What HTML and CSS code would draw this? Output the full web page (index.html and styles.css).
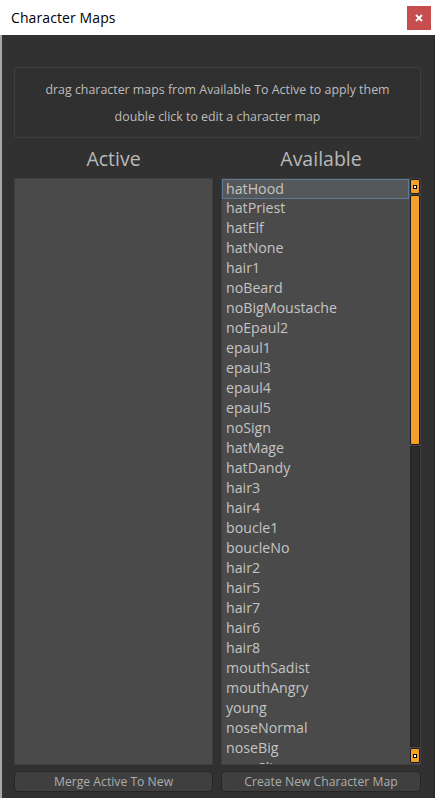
FILE: index.html
```html
<!DOCTYPE html>
<html>
<head>
<meta charset="utf-8">
<link rel="stylesheet" href="styles.css">
</head>
<body>
<div class="window">
  <div class="titlebar">
    <span class="title">Character Maps</span>
    <button class="close" aria-label="close">
      <svg width="10" height="10" viewBox="0 0 10 10"><path d="M2 2 L8 8 M8 2 L2 8" stroke="#fff" stroke-width="1.8"/></svg>
    </button>
  </div>
  <div class="main">
    <div class="info">
      <p>drag character maps from Available To Active to apply them</p>
      <p>double click to edit a character map</p>
    </div>
    <div class="columns">
      <div class="col">
        <h2>Active</h2>
        <div class="list"></div>
        <button class="btn">Merge Active To New</button>
      </div>
      <div class="col">
        <h2>Available</h2>
        <div class="list list-avail">
          <ul class="items">
            <li class="sel">hatHood</li>
            <li>hatPriest</li>
            <li>hatElf</li>
            <li>hatNone</li>
            <li>hair1</li>
            <li>noBeard</li>
            <li>noBigMoustache</li>
            <li>noEpaul2</li>
            <li>epaul1</li>
            <li>epaul3</li>
            <li>epaul4</li>
            <li>epaul5</li>
            <li>noSign</li>
            <li>hatMage</li>
            <li>hatDandy</li>
            <li>hair3</li>
            <li>hair4</li>
            <li>boucle1</li>
            <li>boucleNo</li>
            <li>hair2</li>
            <li>hair5</li>
            <li>hair7</li>
            <li>hair6</li>
            <li>hair8</li>
            <li>mouthSadist</li>
            <li>mouthAngry</li>
            <li>young</li>
            <li>noseNormal</li>
            <li>noseBig</li>
            <li>noseSlim</li>
          </ul>
          <div class="scrollbar">
            <div class="sb-btn"><i></i></div>
            <div class="sb-thumb"></div>
            <div class="sb-track"></div>
            <div class="sb-btn"><i></i></div>
          </div>
        </div>
        <button class="btn">Create New Character Map</button>
      </div>
    </div>
  </div>
</div>
</body>
</html>
```

FILE: styles.css
```css
* { box-sizing: border-box; }
html, body {
  margin: 0;
  padding: 0;
  width: 435px;
  height: 798px;
  overflow: hidden;
  background: #313131;
  font-family: "Open Sans", "Noto Sans", sans-serif;
}
.window {
  width: 435px;
  height: 798px;
  display: flex;
  flex-direction: column;
}
.titlebar {
  height: 35px;
  background: #ffffff;
  display: flex;
  align-items: center;
  justify-content: space-between;
  padding: 0 4px 0 11px;
}
.title {
  font-size: 14px;
  color: #000;
  letter-spacing: 0.1px;
}
.close {
  width: 24px;
  height: 24px;
  margin-top: 1px;
  border: none;
  padding: 0;
  background: #c74d4f;
  display: flex;
  align-items: center;
  justify-content: center;
}
.main {
  flex: 1;
  background: #313131;
  border-left: 2px solid #a7a7a7;
  border-right: 2px solid #2a2a2a;
  padding: 32px 12px 6px 12px;
  display: flex;
  flex-direction: column;
}
.info {
  height: 71px;
  border: 1px solid #3f3f3f;
  border-radius: 2px;
  background: #303030;
  display: flex;
  flex-direction: column;
  align-items: center;
  padding-top: 8px;
}
.info p {
  margin: 0;
  height: 27px;
  line-height: 27px;
  font-size: 12.4px;
  color: #bdbdbd;
}
.columns {
  flex: 1;
  display: grid;
  grid-template-columns: 199px 200px;
  column-gap: 8px;
  margin-top: 7px;
}
.col {
  display: flex;
  flex-direction: column;
  min-height: 0;
}
.col h2 {
  margin: 0;
  height: 33px;
  font-weight: normal;
  font-size: 19.5px;
  line-height: 27px;
  color: #b9b9b9;
  text-align: center;
}
.list {
  height: 587px;
  background: #4a4a4a;
  border: 1px solid #3e3e3e;
  overflow: hidden;
}
.list-avail {
  display: flex;
}
.items {
  list-style: none;
  margin: 0;
  padding: 0;
  flex: 1;
  min-width: 0;
  overflow: hidden;
}
.items li {
  height: 20px;
  line-height: 18px;
  padding-left: 4px;
  font-size: 14.2px;
  color: #c4c4c4;
  white-space: nowrap;
}
.items li.sel {
  background: #555758;
  border: 1px solid #5c7a96;
  padding-left: 3px;
  line-height: 17px;
  margin-right: 1px;
}
.scrollbar {
  width: 10px;
  display: flex;
  flex-direction: column;
  gap: 1px;
  padding-bottom: 1px;
}
.sb-btn {
  height: 15px;
  background: #f6a02c;
  border: 1px solid #1c1c1c;
  border-radius: 2px;
  display: flex;
  align-items: center;
  justify-content: center;
}
.sb-btn i {
  display: block;
  width: 4px;
  height: 4px;
  border: 1px solid #000;
  background: #fff;
}
.sb-thumb {
  height: 250px;
  background: #f6a02c;
  border: 1px solid #1c1c1c;
  border-radius: 2px;
}
.sb-track {
  flex: 1;
  background: #2b2b2b;
  border: 1px solid #262626;
}
.btn {
  margin-top: 6px;
  height: 21px;
  background: #3f3f3f;
  border: 1px solid #262626;
  border-radius: 4px;
  color: #adadad;
  font-family: "Open Sans", "Noto Sans", sans-serif;
  font-size: 12.2px;
  line-height: 19px;
  padding: 0;
}
```
